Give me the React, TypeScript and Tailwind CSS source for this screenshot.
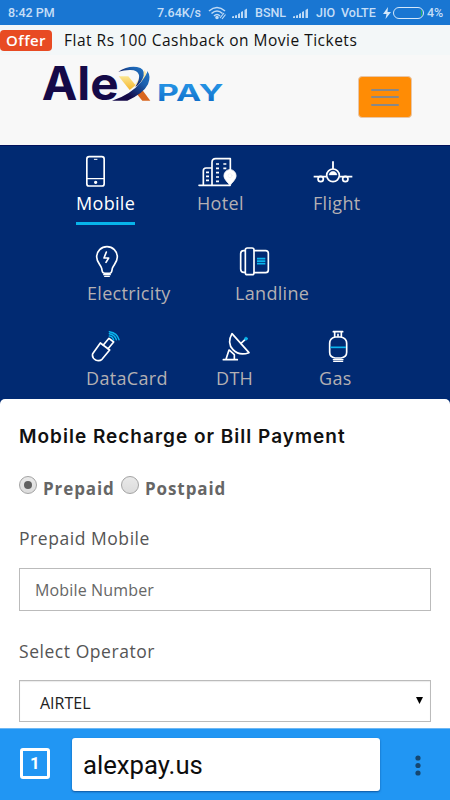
import { ReactNode } from "react"

const line = {
  fill: "none",
  stroke: "#fff",
  strokeWidth: 5,
  strokeLinecap: "round" as const,
  strokeLinejoin: "round" as const,
}

const MobileIcon = () => (
  <svg viewBox="48 30 120 96" className="w-10 h-8" {...line}>
    <rect x="80.500" y="35" width="52" height="88" rx="7" />
    <path d="M81 101h51" strokeWidth="4" />
    <path d="M103 43h8" strokeWidth="3" />
    <circle cx="107" cy="112" r="3" fill="#fff" strokeWidth="4" />
  </svg>
)

const HotelIcon = () => (
  <svg viewBox="411 30 120 96" className="w-10 h-8" {...line}>
    <path d="M417 121h92M430 121V77q0-8 8-8h16" />
    <path d="M456 121V52q0-11 11-11h44v33" />
    <path d="M438 82h9M438 94h9M438 106h9M468 57h9M490 57h9M468 70h9M490 70h9M468 83h9M468 96h9M468 109h9" strokeLinecap="butt" />
    <path d="M510 122c-5-10-18-18-18-30a18 18 0 0 1 36 0c0 12-13 20-18 30z" fill="#fff" strokeWidth="3" />
    <circle cx="510" cy="92" r="6" stroke="#e3e7ef" strokeWidth="1.500" />
  </svg>
)

const FlightIcon = () => (
  <svg viewBox="189 30 120 96" className="w-10 h-8" {...line} strokeLinecap="butt">
    <circle cx="249" cy="91" r="19" />
    <path d="M249 49v23M191 95h38M269 95h38" strokeWidth="5.500" />
    <circle cx="212" cy="102" r="8" />
    <circle cx="286" cy="102" r="8" />
    <path d="M237 90c2-15 22-15 24 0z" fill="#fff" strokeWidth="1" />
  </svg>
)

const ElectricityIcon = () => (
  <svg viewBox="51 30 120 96" className="w-10 h-8" {...line}>
    <path d="M99 113c-3-3-3-9-4-13-2-10-15-18-15-34a31 31 0 0 1 62 0c0 16-12 24-15 34-1 4-1 10-4 13-2 3-21 3-24 0z" />
    <path d="M101 119h20M104 124h14" strokeWidth="4" />
    <path d="M109 51l-7 18h14l-8 13" />
  </svg>
)

const LandlineIcon = () => (
  <svg viewBox="495 30 120 96" className="w-10 h-8" {...line}>
    <rect x="526" y="39" width="26" height="80" rx="6" />
    <path d="M525 47h-4q-9 0-9 9v46q0 10 9 10h4M553 47h34q8 0 8 8v50q0 8-8 8h-34" />
    <path d="M561 71h25M561 78.500h25M561 86h25" stroke="#0bb5ec" strokeLinecap="butt" />
  </svg>
)

const DataCardIcon = () => (
  <svg viewBox="48 30 120 96" className="w-10 h-8" {...line}>
    <path d="M91 69l28 21-23 28q-8 7-19 2-12-6-9-19z" />
    <path d="M100 75l17-20 14 11-17 20" />
    <path d="M118 48q10 1 13 12M118 41q17 3 21 18M118 35q24 4 29 24" stroke="#0bb5ec" strokeWidth="4.500" />
  </svg>
)

const DishIcon = () => (
  <svg viewBox="438 30 120 96" className="w-10 h-8" {...line}>
    <path d="M486 41l51 57q-29 11-48-9-19-20-3-48z" />
    <path d="M460 119h42M468 118l9-28M479 91l14 13v15M513 70l12-11" />
    <circle cx="528" cy="56" r="4.500" fill="#0bb5ec" stroke="#0bb5ec" strokeWidth="2" />
  </svg>
)

const GasIcon = () => (
  <svg viewBox="747 30 120 96" className="w-10 h-8" {...line}>
    <path d="M790 35h28M794 36v14M814 36v14M804 43v6" />
    <path d="M795 51h18q17 4 17 19v27q0 15-17 17h-18q-16-2-16-17V70q0-15 16-19z" />
    <path d="M790 119h29M791 124h27" strokeWidth="4" />
    <path d="M781 82h47" stroke="#0bb5ec" strokeLinecap="butt" />
  </svg>
)

const Logo = () => (
  <svg viewBox="30 -6 552 186" className="w-[184px] h-[62px] -mt-0.5">
    <defs>
      <linearGradient id="swoosh" x1="0" y1="1" x2="1" y2="0">
        <stop offset="0.3" stopColor="#150a48" />
        <stop offset="0.7" stopColor="#1b5fae" />
        <stop offset="1" stopColor="#2377c4" />
      </linearGradient>
      <linearGradient id="gold" x1="0" y1="0" x2="0" y2="1">
        <stop offset="0" stopColor="#fbe590" />
        <stop offset="1" stopColor="#f5b62c" />
      </linearGradient>
      <linearGradient id="pay" x1="0" y1="0" x2="0" y2="1">
        <stop offset="0.3" stopColor="#2390e2" />
        <stop offset="1" stopColor="#0a67c4" />
      </linearGradient>
    </defs>
    <text x="35" y="136" fontSize="139" fontWeight="700" fontFamily="Inter, sans-serif" fill="#150a48" textLength="231" lengthAdjust="spacingAndGlyphs">Ale</text>
    <path d="M313 91l18-25q9-11 12-21l9 14q-12 21-39 32z" fill="#fae9ad" />
    <path d="M266 64h29l22 27-18 14z" fill="url(#gold)" />
    <path d="M316 112l17-12 28 37h-24z" fill="#d9661f" />
    <path d="M246 137q56-18 88-57 19-25 18-32 12 16 2 40-14 28-62 49z" fill="url(#swoosh)" />
    <path d="M265 50q27-18 56-14 24 4 20 26-5 20-25 34 14-22 11-36-5-16-28-15-17 0-34 5z" fill="url(#swoosh)" />
    <text x="381" y="137" fontSize="68" fontWeight="700" fontFamily="Inter, sans-serif" fill="url(#pay)" textLength="199" lengthAdjust="spacingAndGlyphs">PAY</text>
  </svg>
)

const Signal = () => (
  <svg viewBox="0 0 16 12" className="w-4 h-3 shrink-0" fill="#bfdaf5">
    <path d="M0 11v-1.500l2-.5v2zM3 11V8.500L5 8v3zM6 11V7l2-1v5zM9 11V5l2-1v7zM12.500 11V3l2.500-1.500V11z" />
  </svg>
)

const Wifi = () => (
  <svg viewBox="0 0 19 14" className="w-[19px] h-3.5 shrink-0" fill="none" stroke="#bfdaf5" strokeWidth="1.600">
    <path d="M1 5q8-7 16 0M3.500 7.500q5.500-5 11 0M6 10q3-3 6 0" />
    <circle cx="9" cy="11.500" r="1" fill="#bfdaf5" />
    <path d="M12 12l4-5M14 13l3.500-4.500" strokeWidth="1.200" />
  </svg>
)

function StatusBar() {
  return (
    <div className="flex items-center h-[25px] bg-[#1976d2] pl-2 pt-px text-[12.5px] font-medium font-[Roboto,sans-serif] text-[#c5def7] whitespace-nowrap">
      <span className="w-[149px]">8:42 PM</span>
      <span className="w-[51px]">7.64K/s</span>
      <Wifi />
      <span className="w-[5px]" />
      <Signal />
      <span className="w-[45px] pl-[7px]">BSNL</span>
      <Signal />
      <span className="w-[32px] pl-[7px]">JIO</span>
      <span className="w-[42px]">VoLTE</span>
      <svg viewBox="0 0 8 12" className="w-2 h-3 shrink-0" fill="#d5e8fa">
        <path d="M5 0L0 7h3.500L2.500 12 8 5H4.500z" />
      </svg>
      <span className="flex justify-end items-center ml-0.5 w-[31px] h-3 rounded-full border border-[#d5e8fa] shrink-0">
        <span className="w-px h-1.5 mr-px bg-[#25b06c]" />
      </span>
      <span className="ml-[3px]">4%</span>
    </div>
  )
}

type TabProps = { name: string; icon: ReactNode; className?: string; active?: boolean }

function Tab({ name, icon, className = "", active }: TabProps) {
  return (
    <div className={`flex flex-col items-start gap-1 ${className}`}>
      {icon}
      <span
        className={
          active
            ? "h-[34px] leading-6 text-white border-b-3 border-[#07b4ea]"
            : "h-6 leading-6 text-[#b4b0b2]"
        }
      >
        {name}
      </span>
    </div>
  )
}

function Services() {
  return (
    <nav className="h-[254px] pt-2.5 bg-[#012a72] border-t border-[#02125c] text-[18px] tracking-[0.32px] whitespace-nowrap">
      <div className="flex pl-[76px] -mt-px">
        <Tab name="Mobile" icon={<MobileIcon />} className="w-[121px]" active />
        <Tab name="Hotel" icon={<HotelIcon />} className="w-[116px]" />
        <Tab name="Flight" icon={<FlightIcon />} />
      </div>
      <div className="flex pl-[87px] mt-5">
        <Tab name="Electricity" icon={<ElectricityIcon />} className="w-[148px]" />
        <Tab name="Landline" icon={<LandlineIcon />} />
      </div>
      <div className="flex pl-[86px] mt-[25px]">
        <Tab name="DataCard" icon={<DataCardIcon />} className="w-[130px]" />
        <Tab name="DTH" icon={<DishIcon />} className="w-[103px]" />
        <Tab name="Gas" icon={<GasIcon />} />
      </div>
    </nav>
  )
}

function Radio({ label, checked, className = "" }: { label: string; checked?: boolean; className?: string }) {
  return (
    <label className={`flex ${className}`}>
      <span className="flex items-center justify-center w-[18px] h-[18px] -mt-px mr-[6px] rounded-full border border-[#a3a3a3] bg-linear-to-b from-[#e9e9e9] to-[#dcdcdc]">
        {checked && <span className="w-2 h-2 rounded-full bg-[#606060]" />}
      </span>
      {label}
    </label>
  )
}

function RechargeForm() {
  return (
    <div className="bg-[#012a72]">
      <form className="h-[329px] px-[19px] pt-[25px] bg-white rounded-t-[5px] text-[17.5px] tracking-[0.55px] text-[#555] whitespace-nowrap">
        <h2 className="h-[26px] leading-[26px] text-[19px] font-semibold tracking-[1px] text-[#111] font-[Inter,sans-serif]">
          Mobile Recharge or Bill Payment
        </h2>
        <div className="flex mt-[27px] h-6 leading-6 text-[17px] font-bold tracking-[0.9px] text-[#666]">
          <Radio label="Prepaid" className="w-[102px]" checked />
          <Radio label="Postpaid" />
        </div>
        <div className="mt-[25px] h-6 leading-6">Prepaid Mobile</div>
        <div className="flex items-center mt-[18px] h-[43px] pl-[15px] border border-[#bbb] text-base tracking-[0.15px] text-[#666]">
          Mobile Number
        </div>
        <div className="mt-7 h-6 leading-6">Select Operator</div>
        <div className="flex items-center justify-between mt-[17px] h-[42px] pl-5 pr-[7px] pt-[3px] border border-[#bbb] shadow-[inset_0_1px_1px_rgba(0,0,0,0.08)] text-base tracking-normal text-[#222]">
          AIRTEL
          <svg viewBox="0 0 7 7" className="w-[7px] h-[7px] -mt-1" fill="#000">
            <path d="M0 0h7L3.500 7z" />
          </svg>
        </div>
      </form>
    </div>
  )
}

function BrowserBar() {
  return (
    <div className="flex items-start h-[72px] pt-[9px] bg-[#2196f3] border-t border-[#6db7f4] font-[Roboto,sans-serif]">
      <div className="flex items-center justify-center ml-5 mt-[10px] w-[30px] h-[31px] rounded-[3px] border-[3.5px] border-white bg-[#2196f3] text-white text-[17px] font-bold">
        1
      </div>
      <div className="flex items-center ml-[22px] w-[308px] h-[53px] pl-[11px] pt-px rounded-[3px] bg-white shadow-[0_1px_2px_rgba(0,40,100,0.6)] text-[25.7px] text-[#0d0d0d]">
        alexpay.us
      </div>
      <svg viewBox="0 0 6 21" className="w-1.5 h-[21px] ml-[34.5px] mt-[16.5px]" fill="#15466f">
        <circle cx="3" cy="3" r="2.600" />
        <circle cx="3" cy="10.500" r="2.600" />
        <circle cx="3" cy="18" r="2.600" />
      </svg>
    </div>
  )
}

export default function App() {
  return (
    <div className="w-[450px] h-[800px] overflow-hidden bg-white font-['Open_Sans',sans-serif]">
      <StatusBar />
      <div className="flex items-center h-[30px] bg-[#f3f7f8] pt-px text-[15px] font-medium tracking-[0.75px] whitespace-nowrap text-[#111]">
        <span className="flex items-center justify-center w-[52px] h-[21px] mr-3 rounded bg-[#e84b23] font-semibold tracking-[0.4px] text-white">Offer</span>
        <span className="text-[15.5px] tracking-[0.5px]">Flat Rs 100 Cashback on Movie Tickets</span>
      </div>
      <header className="flex justify-between h-[90px] pl-10 pr-[38px] bg-[#f8f8f8]">
        <Logo />
        <button className="flex flex-col items-center justify-center gap-[5.5px] w-[54px] h-[42px] mt-[21px] rounded border border-[#e8c6a8] bg-[#ff8c05]">
          <span className="w-7 h-0.5 rounded-full bg-[#888]" />
          <span className="w-7 h-0.5 rounded-full bg-[#888]" />
          <span className="w-7 h-0.5 rounded-full bg-[#888]" />
        </button>
      </header>
      <Services />
      <RechargeForm />
      <BrowserBar />
    </div>
  )
}
